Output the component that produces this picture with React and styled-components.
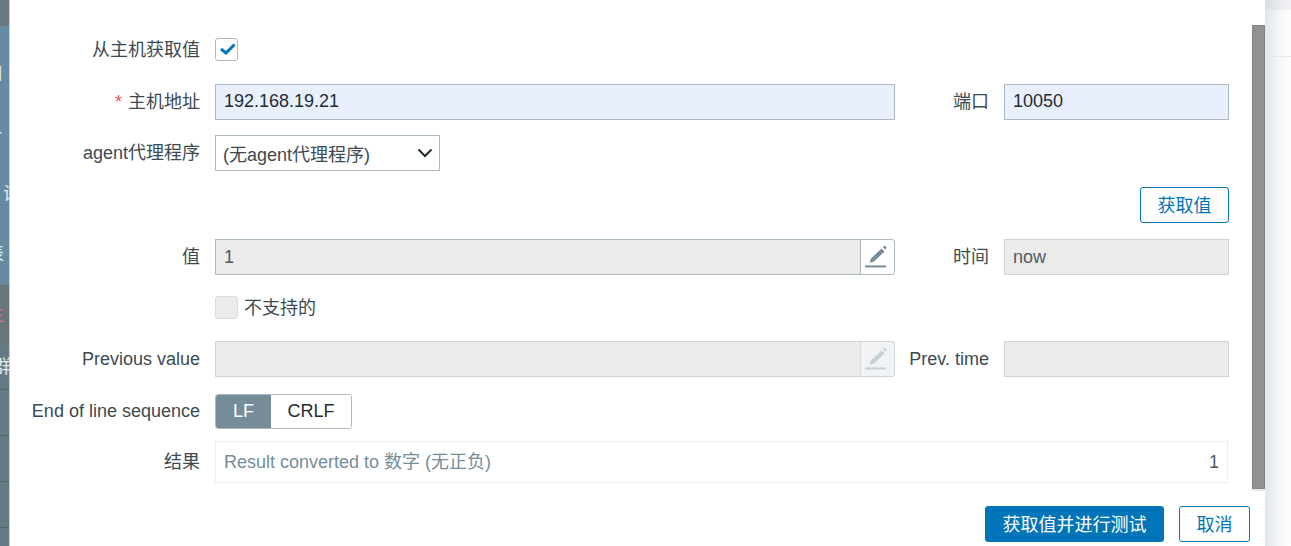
import React from 'react'
import styled, {createGlobalStyle} from 'styled-components'

const Global = createGlobalStyle`
html, body {
  margin: 0;
  padding: 0;
  background: #fff;
  overflow: hidden;
}
* {
  box-sizing: border-box;
}
body {
  font-family: "Liberation Sans", "Noto Sans CJK SC", sans-serif;
  font-size: 18px;
  color: #1f2c33;
}
`
const Page = styled.div`
display: flex;
width: 1291px;
height: 546px;
overflow: hidden;
`
const Sidebar = styled.div`
flex: 0 0 10px;
display: flex;
flex-direction: column;
overflow: hidden;
border-right: 1px solid #c3d5e0;
background: #667a85;
`
const SideTop = styled.div`
flex: 0 0 26px;
background: #687880;
`
const SideBlue = styled.div`
flex: 0 0 259px;
padding-top: 18px;
background: #668ba3;
`
const NavItem = styled.div`
flex: 0 0 auto;
height: ${props => props.$height}px;
display: flex;
align-items: center;
overflow: hidden;
white-space: nowrap;
line-height: 20px;
color: ${props => props.$color || '#e6edf1'};
background: ${props => props.$bg || 'transparent'};
border-bottom: ${props => props.$line ? '1px solid #56666f' : 'none'};
`
const NavGlyph = styled.span`
flex: none;
margin-left: ${props => props.$x}px;
`
const Modal = styled.div`
flex: 0 0 1255px;
display: flex;
flex-direction: column;
background: #fff;
`
const ModalBody = styled.div`
flex: 0 0 491px;
display: flex;
`
const Form = styled.div`
flex: 1;
padding-top: 38px;
`
const Row = styled.div`
display: flex;
align-items: center;
margin-top: ${props => props.$top || 0}px;
`
const Label = styled.div`
flex: 0 0 ${props => props.$width || 190}px;
margin-right: 15px;
padding-bottom: ${props => props.$up ? 1 : 0}px;
text-align: right;
line-height: 22px;
color: #3c4a52;
white-space: nowrap;
`
const Star = styled.span`
color: #e45959;
margin-right: 6px;
`
const Input = styled.input`
display: block;
flex: none;
width: ${props => props.$width}px;
height: 36px;
padding: 0 8px ${props => props.$muted ? 0 : 2}px;
border: 1px solid ${props => props.$faint ? '#ccd6db' : '#acbbc2'};
border-radius: 0;
outline: none;
font: inherit;
color: ${props => props.$muted ? '#4e5a61' : '#1f2c33'};
background: ${props => props.$muted ? '#ebebeb' : '#e8f0fe'};
`
const EditGroup = styled.div`
display: flex;
width: 680px;
`
const EditButton = styled.div`
flex: 0 0 35px;
height: 36px;
display: flex;
align-items: center;
justify-content: center;
border: 1px solid ${props => props.$faint ? '#ccd6db' : '#acbbc2'};
border-left: 1px solid ${props => props.$faint ? '#d5dde1' : '#acbbc2'};
border-radius: 0 3px 3px 0;
margin-left: -1px;
background: ${props => props.$faint ? '#f1f2f3' : '#fff'};
`
const Check = styled.div`
flex: none;
width: 23px;
height: 23px;
display: flex;
align-items: center;
justify-content: center;
border: 1px solid ${props => props.$off ? '#d3dce0' : '#acbbc2'};
border-radius: 3px;
background: ${props => props.$off ? '#ebebeb' : '#fff'};
`
const CheckLabel = styled.span`
margin-left: 6px;
padding-top: 2px;
color: #3c4a52;
line-height: 22px;
`
const Select = styled.div`
width: 225px;
height: 36px;
display: flex;
align-items: center;
justify-content: space-between;
padding: 0 6px 0 7px;
border: 1px solid #acbbc2;
color: #3c4a52;
`
const ActionRow = styled.div`
display: flex;
justify-content: flex-end;
width: 1229px;
margin-top: 16px;
margin-left: -10px;
`
const Button = styled.button`
display: block;
width: ${props => props.$width}px;
height: 36px;
padding: 0 0 2px;
border: 1px solid #0275b8;
border-radius: 3px;
font: inherit;
color: ${props => props.$primary ? '#fff' : '#0275b8'};
background: ${props => props.$primary ? '#0275b8' : '#fff'};
`
const Segments = styled.div`
display: flex;
height: 35px;
border: 1px solid #acbbc2;
border-radius: 3px;
overflow: hidden;
`
const Segment = styled.div`
width: ${props => props.$width}px;
display: flex;
align-items: center;
justify-content: center;
color: ${props => props.$on ? '#fff' : '#1f2c33'};
background: ${props => props.$on ? '#768d99' : '#fff'};
`
const Result = styled.div`
width: 1013px;
height: 42px;
display: flex;
align-items: center;
justify-content: space-between;
padding: 0 8px;
border: 1px solid #ebeef0;
color: #4e5a61;
`
const ResultText = styled.span`
margin-bottom: 4px;
color: #768d99;
`
const ScrollTrack = styled.div`
flex: 0 0 13px;
padding-top: 25px;
background: linear-gradient(#fff 489px, #e6e8ea 489px);
`
const ScrollThumb = styled.div`
height: 464px;
background: #919191;
border: 1px solid #828282;
border-bottom: 1px solid #888;
`
const Footer = styled.div`
flex: 1;
display: flex;
justify-content: flex-end;
gap: 15px;
padding: 15px 15px 0 0;
`
const RightSide = styled.div`
flex: 1;
display: flex;
flex-direction: column;
background: linear-gradient(90deg, #e1e5e9, #f5f6f7 55%, #fdfdfd);
`
const RightHead = styled.div`
flex: 0 0 10px;
background: linear-gradient(90deg, #d9dee2, #e9ebee 60%, #f1f2f3);
`
const RightLine = styled.div`
flex: 0 0 47px;
border-bottom: 1px solid #e6e8ea;
`

function PencilIcon (props) {
  var color = props.faint ? '#c4d0d6' : '#768d99'
  return (
    <svg width='33' height='34' viewBox='0 0 33 34'>
      <path d='M8.5 22.5 L10 18.5 L20.5 8.5 L23.5 11.5 L13 21.5 Z' fill={color} />
      <path d='M21.8 7 L23.2 6 Q24 5.6 24.8 6.4 L25.3 7 Q25.8 7.8 25.2 8.6 L24.5 9.8 Z' fill={color} />
      <rect x='4' y='25.4' width='21' height='2' fill={color} />
    </svg>
  )
}

function App () {
  return (
    <Page>
      <Global />
      <Sidebar>
        <SideTop />
        <SideBlue>
          <NavItem $height={60}><NavGlyph $x={-15}>口</NavGlyph></NavItem>
          <NavItem $height={60}><NavGlyph $x={-16}>一</NavGlyph></NavItem>
          <NavItem $height={60}><NavGlyph $x={3}>设</NavGlyph></NavItem>
          <NavItem $height={60}><NavGlyph $x={-14}>表</NavGlyph></NavItem>
        </SideBlue>
        <NavItem $height={60} $bg='#6a747b' $color='#e0707c'><NavGlyph $x={-14}>主</NavGlyph></NavItem>
        <NavItem $height={45} $line><NavGlyph $x={-7}>群</NavGlyph></NavItem>
        <NavItem $height={46} $line />
        <NavItem $height={46} $line />
        <NavItem $height={46} $line />
        <NavItem $height={20} />
      </Sidebar>
      <Modal>
        <ModalBody>
          <Form>
            <Row>
              <Label>从主机获取值</Label>
              <Check>
                <svg width='21' height='21' viewBox='0 0 21 21'>
                  <path d='M5 10 L10 14 L18.5 5.5' fill='none' stroke='#0275b8' strokeWidth='3' />
                </svg>
              </Check>
            </Row>
            <Row $top={23}>
              <Label $up><Star>*</Star>主机地址</Label>
              <Input $width={680} value='192.168.19.21' readOnly />
              <Label $width={94}>端口</Label>
              <Input $width={225} value='10050' readOnly />
            </Row>
            <Row $top={15}>
              <Label>agent代理程序</Label>
              <Select>
                <span>(无agent代理程序)</span>
                <svg width='16' height='10' viewBox='0 0 16 10'>
                  <path d='M1.5 1.5 L8 8 L14.5 1.5' fill='none' stroke='#1f2c33' strokeWidth='2' />
                </svg>
              </Select>
            </Row>
            <ActionRow>
              <Button $width={89}>获取值</Button>
            </ActionRow>
            <Row $top={16}>
              <Label>值</Label>
              <EditGroup>
                <Input $width={646} $muted value='1' readOnly />
                <EditButton><PencilIcon /></EditButton>
              </EditGroup>
              <Label $width={94}>时间</Label>
              <Input $width={225} $muted $faint value='now' readOnly />
            </Row>
            <Row $top={20}>
              <Label />
              <Check $off />
              <CheckLabel>不支持的</CheckLabel>
            </Row>
            <Row $top={22}>
              <Label>Previous value</Label>
              <EditGroup>
                <Input $width={646} $muted $faint value='' readOnly />
                <EditButton $faint><PencilIcon faint /></EditButton>
              </EditGroup>
              <Label $width={94}>Prev. time</Label>
              <Input $width={225} $muted $faint value='' readOnly />
            </Row>
            <Row $top={17}>
              <Label $up>End of line sequence</Label>
              <Segments>
                <Segment $on $width={55}>LF</Segment>
                <Segment $width={80}>CRLF</Segment>
              </Segments>
            </Row>
            <Row $top={12}>
              <Label>结果</Label>
              <Result>
                <ResultText>Result converted to 数字 (无正负)</ResultText>
                <span>1</span>
              </Result>
            </Row>
          </Form>
          <ScrollTrack>
            <ScrollThumb />
          </ScrollTrack>
        </ModalBody>
        <Footer>
          <Button $primary $width={179}>获取值并进行测试</Button>
          <Button $width={71}>取消</Button>
        </Footer>
      </Modal>
      <RightSide>
        <RightHead />
        <RightLine />
      </RightSide>
    </Page>
  )
}

export default App
